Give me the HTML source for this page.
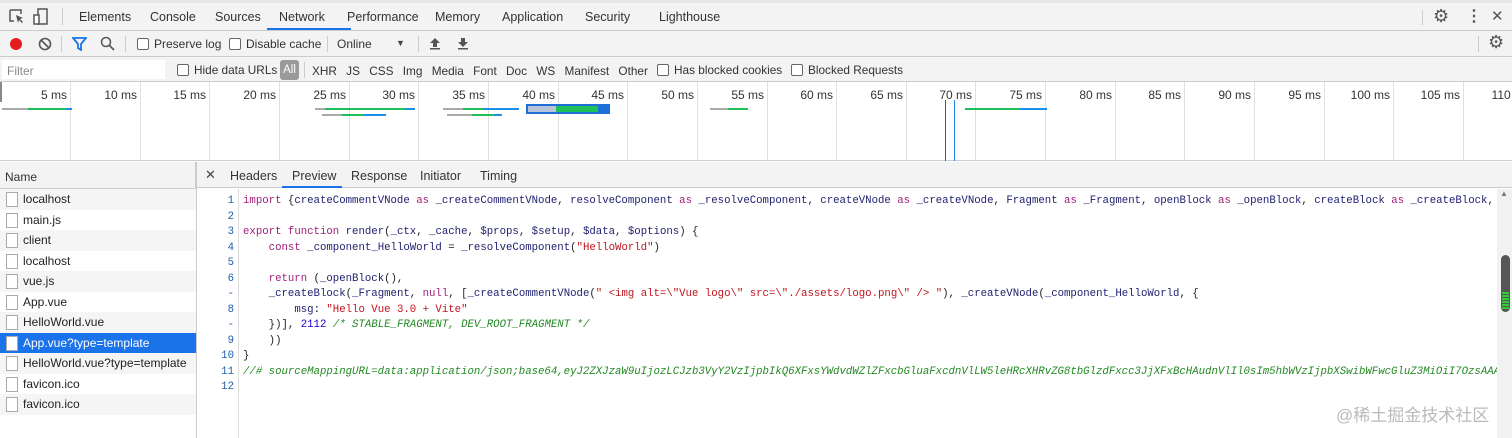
<!DOCTYPE html>
<html><head><meta charset="utf-8"><style>
*{margin:0;padding:0;box-sizing:border-box}
body{width:1512px;height:438px;overflow:hidden;background:#fff;font-family:"Liberation Sans",sans-serif;font-size:12px;color:#333;position:relative}
.abs{position:absolute}
.bar{position:absolute;left:0;width:1512px;background:#f3f3f3;border-bottom:1px solid #ccc}
.t{position:absolute;top:10px;color:#333;font-size:12.5px}
.f{font-size:12px}
.cb{display:inline-block;width:12px;height:12px;border:1px solid #666;border-radius:2px;background:#fff;vertical-align:-2px;margin-right:5px}
.grid{position:absolute;top:82px;height:79px;width:1px;background:#e0e0e0}
.lbl{position:absolute;top:88px;font-size:12px;color:#333;text-align:right;width:60px}
.row{position:absolute;left:0;width:196px;height:20.5px;font-size:12px;padding-left:23px;line-height:20.5px;color:#222}
.ic{position:absolute;left:6px;top:3px;width:12px;height:15px;border:1px solid #aaa;background:#fff}
.code{position:absolute;left:243px;font-family:"Liberation Mono",monospace;font-size:10.7px;white-space:pre;color:#222;line-height:15.5px}
.ln{position:absolute;left:200px;width:34px;text-align:right;font-family:"Liberation Mono",monospace;font-size:10.7px;color:#2060b0;line-height:15.5px;white-space:pre}
.k{color:#a0207a}.v{color:#1e1e6e}.s{color:#c0141e}.n{color:#1c00cf}.c{color:#238a23;font-style:italic}
</style></head><body>
<div class="bar" style="top:0;height:31px;border-top:3px solid #e6e6e6"></div>
<svg class="abs" style="left:9px;top:9px" width="16" height="16"><path d="M1 1h11v4M1 1v11h4" fill="none" stroke="#555" stroke-width="1.5"/><path d="M7 6l7 3-3 1 3 3-1 1-3-3-1 3z" fill="#555"/></svg>
<svg class="abs" style="left:33px;top:8px" width="16" height="18"><rect x="5" y="1" width="9" height="15" fill="none" stroke="#555" stroke-width="1.5"/><rect x="1" y="7" width="5" height="9" fill="#fff" stroke="#555" stroke-width="1.5"/></svg>
<div class="abs" style="left:62px;top:8px;width:1px;height:17px;background:#ccc"></div>
<span class="t" style="left:79px">Elements</span>
<span class="t" style="left:150px">Console</span>
<span class="t" style="left:215px">Sources</span>
<span class="t" style="left:279px">Network</span>
<div class="abs" style="left:267px;top:28px;width:84px;height:2px;background:#1a73e8"></div>
<span class="t" style="left:347px">Performance</span>
<span class="t" style="left:435px">Memory</span>
<span class="t" style="left:502px">Application</span>
<span class="t" style="left:585px">Security</span>
<span class="t" style="left:659px">Lighthouse</span>
<div class="abs" style="left:1422px;top:10px;width:1px;height:15px;background:#ccc"></div>
<span class="abs" style="left:1433px;top:6px;font-size:18px;color:#555">⚙</span>
<span class="abs" style="left:1466px;top:6px;font-size:16px;color:#555;font-weight:bold">⋮</span>
<span class="abs" style="left:1491px;top:7px;font-size:15px;color:#555">✕</span>
<div class="bar" style="top:31px;height:26px"></div>
<div class="abs" style="left:10px;top:38px;width:12px;height:12px;border-radius:50%;background:#e41e1e"></div>
<svg class="abs" style="left:38px;top:37px" width="14" height="14"><circle cx="7" cy="7" r="5.5" fill="none" stroke="#555" stroke-width="1.6"/><path d="M3 3l8 8" stroke="#555" stroke-width="1.6"/></svg>
<div class="abs" style="left:61px;top:36px;width:1px;height:16px;background:#ccc"></div>
<svg class="abs" style="left:72px;top:37px" width="15" height="14"><path d="M1 1h13l-5 6v6l-3-2v-4z" fill="none" stroke="#1a73e8" stroke-width="1.8"/></svg>
<svg class="abs" style="left:100px;top:36px" width="15" height="15"><circle cx="6" cy="6" r="4.5" fill="none" stroke="#555" stroke-width="1.5"/><path d="M9 9l5 5" stroke="#555" stroke-width="1.7"/></svg>
<div class="abs" style="left:125px;top:36px;width:1px;height:16px;background:#ccc"></div>
<span class="t f" style="left:137px;top:37px"><span class="cb"></span>Preserve log</span>
<span class="t f" style="left:229px;top:37px"><span class="cb"></span>Disable cache</span>
<div class="abs" style="left:327px;top:36px;width:1px;height:16px;background:#ccc"></div>
<span class="t f" style="left:337px;top:37px">Online</span>
<span class="abs" style="left:396px;top:38px;font-size:9px;color:#444">▼</span>
<div class="abs" style="left:418px;top:36px;width:1px;height:16px;background:#ccc"></div>
<svg class="abs" style="left:429px;top:37px" width="12" height="13"><path d="M6 1l5 5H8v4H4V6H1z" fill="#555"/><rect x="1" y="11" width="10" height="1.5" fill="#555"/></svg>
<svg class="abs" style="left:457px;top:37px" width="12" height="13"><path d="M6 10l5-5H8V1H4v4H1z" fill="#555"/><rect x="1" y="11" width="10" height="1.5" fill="#555"/></svg>
<div class="abs" style="left:1478px;top:36px;width:1px;height:16px;background:#ccc"></div>
<span class="abs" style="left:1488px;top:32px;font-size:18px;color:#555">⚙</span>
<div class="bar" style="top:57px;height:25px"></div>
<div class="abs" style="left:2px;top:60px;width:163px;height:19px;background:#fff"></div>
<span class="abs" style="left:7px;top:64px;color:#888;font-size:12px">Filter</span>
<span class="t" style="left:177px;top:63px;font-size:11.8px"><span class="cb"></span>Hide data URLs</span>
<div class="abs" style="left:280px;top:60px;width:19px;height:20px;background:#9a9a9a;border-radius:3px;color:#fff;font-size:11.5px;text-align:center;line-height:20px">All</div>
<div class="abs" style="left:304px;top:62px;width:1px;height:16px;background:#ccc"></div>
<span class="t" style="left:312px;top:64px;font-size:11.8px;word-spacing:6px">XHR JS CSS Img Media Font Doc WS Manifest Other</span>
<span class="t" style="left:657px;top:63px;font-size:11.8px"><span class="cb"></span>Has blocked cookies</span>
<span class="t" style="left:791px;top:63px;font-size:11.8px"><span class="cb"></span>Blocked Requests</span>
<div class="abs" style="left:0;top:82px;width:1512px;height:79px;background:#fff;border-bottom:1px solid #ccc"></div>
<div class="abs" style="left:0;top:82px;width:2px;height:20px;background:#888"></div>
<div id="tl"></div>
<div class="abs" style="left:2px;top:108px;width:30px;height:2px;background:#aaa"></div>
<div class="abs" style="left:28px;top:108px;width:40px;height:2px;background:#1ec05a"></div>
<div class="abs" style="left:66px;top:108px;width:6px;height:2px;background:#1e90e8"></div>
<div class="abs" style="left:315px;top:108px;width:10px;height:2px;background:#aaa"></div>
<div class="abs" style="left:325px;top:108px;width:80px;height:2px;background:#1ec05a"></div>
<div class="abs" style="left:405px;top:108px;width:10px;height:2px;background:#1e90e8"></div>
<div class="abs" style="left:322px;top:114px;width:20px;height:2px;background:#aaa"></div>
<div class="abs" style="left:342px;top:114px;width:22px;height:2px;background:#1ec05a"></div>
<div class="abs" style="left:364px;top:114px;width:22px;height:2px;background:#1e90e8"></div>
<div class="abs" style="left:443px;top:108px;width:20px;height:2px;background:#aaa"></div>
<div class="abs" style="left:463px;top:108px;width:20px;height:2px;background:#1ec05a"></div>
<div class="abs" style="left:483px;top:108px;width:36px;height:2px;background:#1e90e8"></div>
<div class="abs" style="left:447px;top:114px;width:25px;height:2px;background:#aaa"></div>
<div class="abs" style="left:472px;top:114px;width:22px;height:2px;background:#1ec05a"></div>
<div class="abs" style="left:494px;top:114px;width:8px;height:2px;background:#1e90e8"></div>
<div class="abs" style="left:526px;top:104px;width:84px;height:10px;background:#1e6fd8"></div>
<div class="abs" style="left:528px;top:106px;width:28px;height:6px;background:#b8c4d8"></div>
<div class="abs" style="left:556px;top:106px;width:42px;height:6px;background:#1ec05a"></div>
<div class="abs" style="left:710px;top:108px;width:18px;height:2px;background:#aaa"></div>
<div class="abs" style="left:728px;top:108px;width:20px;height:2px;background:#1ec05a"></div>
<div class="abs" style="left:965px;top:108px;width:55px;height:2px;background:#1ec05a"></div>
<div class="abs" style="left:1020px;top:108px;width:27px;height:2px;background:#1e90e8"></div>
<div class="abs" style="left:945px;top:100px;width:1px;height:61px;background:#d02020"></div>
<div class="abs" style="left:954px;top:100px;width:1px;height:61px;background:#2080e0"></div>
<div class="abs" style="left:0;top:162px;width:196px;height:27px;background:#f3f3f3;border-bottom:1px solid #ccc;border-right:1px solid #ccc;padding:8px 5px;font-size:12px">Name</div>
<div class="abs" style="left:196px;top:162px;width:1px;height:276px;background:#ccc"></div>
<div class="abs" style="left:0;top:189px;width:196px">
<div class="row" style="top:0;background:#f5f5f5"><div class="ic"></div>localhost</div>
<div class="row" style="top:20.5px;background:#fff"><div class="ic"></div>main.js</div>
<div class="row" style="top:41px;background:#f5f5f5"><div class="ic"></div>client</div>
<div class="row" style="top:61.5px;background:#fff"><div class="ic"></div>localhost</div>
<div class="row" style="top:82px;background:#f5f5f5"><div class="ic"></div>vue.js</div>
<div class="row" style="top:102.5px;background:#fff"><div class="ic"></div>App.vue</div>
<div class="row" style="top:123px;background:#f5f5f5"><div class="ic"></div>HelloWorld.vue</div>
<div class="row" style="top:143.5px;background:#1a73e8;color:#fff"><div class="ic"></div>App.vue?type=template</div>
<div class="row" style="top:164px;background:#f5f5f5"><div class="ic"></div>HelloWorld.vue?type=template</div>
<div class="row" style="top:184.5px;background:#fff"><div class="ic"></div>favicon.ico</div>
<div class="row" style="top:205px;background:#f5f5f5"><div class="ic"></div>favicon.ico</div>
</div>
<div class="abs" style="left:197px;top:162px;width:1315px;height:26px;background:#f3f3f3;border-bottom:1px solid #ccc"></div>
<span class="abs" style="left:205px;top:167px;font-size:13px;color:#444">✕</span>
<span class="t" style="left:230px;top:169px">Headers</span>
<span class="t" style="left:292px;top:169px">Preview</span>
<div class="abs" style="left:282px;top:186px;width:60px;height:2px;background:#1a73e8"></div>
<span class="t" style="left:351px;top:169px">Response</span>
<span class="t" style="left:420px;top:169px">Initiator</span>
<span class="t" style="left:480px;top:169px">Timing</span>
<div class="abs" style="left:238px;top:189px;width:1px;height:249px;background:#ddd"></div>
<div class="ln" style="top:194px">1
2
3
4
5
6
-
8
-
9
10
11
12</div>
<div class="code" style="top:194px;width:1254px;overflow:hidden"><span class="k">import</span> {<span class="v">createCommentVNode</span> <span class="k">as</span> <span class="v">_createCommentVNode</span>, <span class="v">resolveComponent</span> <span class="k">as</span> <span class="v">_resolveComponent</span>, <span class="v">createVNode</span> <span class="k">as</span> <span class="v">_createVNode</span>, <span class="v">Fragment</span> <span class="k">as</span> <span class="v">_Fragment</span>, <span class="v">openBlock</span> <span class="k">as</span> <span class="v">_openBlock</span>, <span class="v">createBlock</span> <span class="k">as</span> <span class="v">_createBlock</span>, <span class="v">withCtx</span> <span class="k">as</span> <span class="v">_withCtx</span>}

<span class="k">export</span> <span class="k">function</span> <span class="v">render</span>(<span class="v">_ctx</span>, <span class="v">_cache</span>, <span class="v">$props</span>, <span class="v">$setup</span>, <span class="v">$data</span>, <span class="v">$options</span>) {
    <span class="k">const</span> <span class="v">_component_HelloWorld</span> = <span class="v">_resolveComponent</span>(<span class="s">"HelloWorld"</span>)

    <span class="k">return</span> (<span class="v">_openBlock</span>(),
    <span class="v">_createBlock</span>(<span class="v">_Fragment</span>, <span class="k">null</span>, [<span class="v">_createCommentVNode</span>(<span class="s">" &lt;img alt=\"Vue logo\" src=\"./assets/logo.png\" /&gt; "</span>), <span class="v">_createVNode</span>(<span class="v">_component_HelloWorld</span>, {
        <span class="v">msg</span>: <span class="s">"Hello Vue 3.0 + Vite"</span>
    })], <span class="n">2112</span> <span class="c">/* STABLE_FRAGMENT, DEV_ROOT_FRAGMENT */</span>
    ))
}
<span class="c">//# sourceMappingURL=data:application/json;base64,eyJ2ZXJzaW9uIjozLCJzb3VyY2VzIjpbIkQ6XFxsYWdvdWZlZFxcbGluaFxcdnVlLW5leHRcXHRvZG8tbGlzdFxcc3JjXFxBcHAudnVlIl0sIm5hbWVzIjpbXSwibWFwcGluZ3MiOiI7OzsAAA</span>
</div>
<div class="abs" style="left:1497px;top:189px;width:15px;height:249px;background:#f1f1f1"></div>
<span class="abs" style="left:1500px;top:189px;font-size:8px;color:#777">▲</span>
<div class="abs" style="left:1501px;top:255px;width:9px;height:57px;background:#555;border-radius:5px"></div>
<div class="abs" style="left:1502px;top:292px;width:7px;height:18px;background:repeating-linear-gradient(#3c3 0 2px,#555 2px 3px)"></div>
<span class="abs" style="left:1336px;top:401px;font-size:17px;color:#bbb;font-family:'Liberation Sans','Noto Sans CJK SC',sans-serif">@稀土掘金技术社区</span>
<script>
var h='';var labels=[5,10,15,20,25,30,35,40,45,50,55,60,65,70,75,80,85,90,95,100,105,110];
for(var i=0;i<labels.length;i++){var x=Math.round(70+i*69.65);h+='<div class="grid" style="left:'+x+'px"></div><div class="lbl" style="left:'+(x-63)+'px">'+labels[i]+' ms</div>';}
document.getElementById('tl').innerHTML=h;
</script>
</body></html>
